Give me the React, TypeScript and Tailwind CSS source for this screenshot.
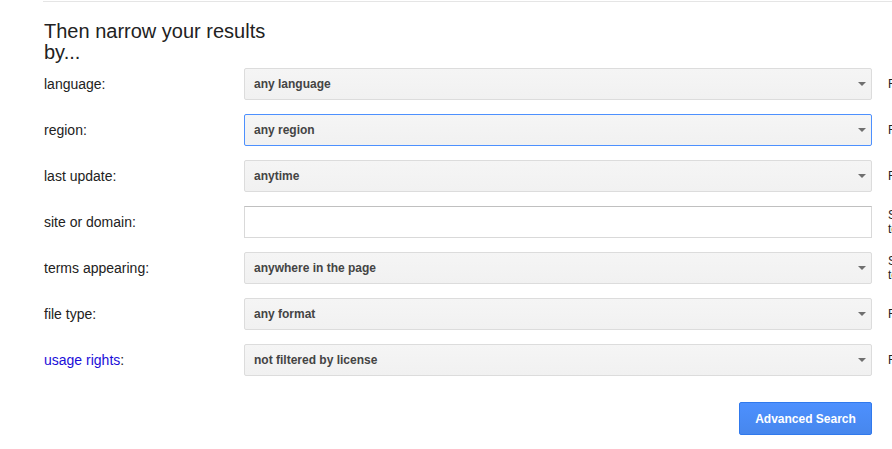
import React from "react";

type Row = {
  label: string;
  value?: string;
  input?: boolean;
  focused?: boolean;
  link?: boolean;
  help: string[];
};

const rows: Row[] = [
  { label: "language:", value: "any language", help: ["Find pages in the language that you select."] },
  { label: "region:", value: "any region", focused: true, help: ["Find pages published in a particular region."] },
  { label: "last update:", value: "anytime", help: ["Find pages updated within the time that you specify."] },
  { label: "site or domain:", input: true, help: ["Search one site (like wikipedia.org) or limit your results", "to a domain like .edu, .org or .gov"] },
  { label: "terms appearing:", value: "anywhere in the page", help: ["Search for terms in the whole page, page title or web address,", "to links to the page you're looking for."] },
  { label: "file type:", value: "any format", help: ["Find pages in the format that you prefer."] },
  { label: "usage rights:", value: "not filtered by license", link: true, help: ["Find pages that you are free to use yourself."] },
];

function Arrow() {
  return (
    <svg width="8" height="4" viewBox="0 0 8 4" className="absolute right-[5px] top-1/2 -translate-y-1/2">
      <path d="M0 0h8L4 4z" fill="#6f6f6f" />
    </svg>
  );
}

export default function App() {
  return (
    <div className="w-[892px] h-[449px] overflow-hidden bg-white font-['Liberation_Sans',Arial,sans-serif] text-[#222]">
      <div className="pl-[43px]">
        <div className="h-[1px] mt-[1px] bg-[#e5e5e5]" />
      </div>
      <div className="pl-[44px] pt-[19px]">
        <div className="w-[240px] text-[20px] leading-[21px] text-[#222]">Then narrow your results by...</div>
        <div className="mt-[5px] flex flex-col gap-[14px]">
          {rows.map((r) => (
            <div key={r.label} className="flex items-center h-[32px]">
              <div className="w-[200px] shrink-0 text-[14px]">
                {r.link ? (
                  <>
                    <span className="text-[#1a0dd8]">usage rights</span>:
                  </>
                ) : (
                  r.label
                )}
              </div>
              {r.input ? (
                <div className="w-[628px] h-[32px] shrink-0 border border-[#d9d9d9] border-t-[#c0c0c0] bg-white" />
              ) : (
                <div
                  className={`relative w-[628px] h-[32px] shrink-0 rounded-[2px] border bg-gradient-to-b from-[#f5f5f5] to-[#f1f1f1] pl-[9px] flex items-center text-[12px] font-bold text-[#444] ${
                    r.focused ? "border-[#4d90fe]" : "border-[#dcdcdc]"
                  }`}
                >
                  {r.value}
                  <Arrow />
                </div>
              )}
              <div className="ml-[16px] whitespace-nowrap text-[12px] leading-[14px] text-[#222]">
                {r.help.map((h) => (
                  <div key={h}>{h}</div>
                ))}
              </div>
            </div>
          ))}
        </div>
        <div className="flex w-[828px] justify-end mt-[26px]">
          <button className="w-[133px] h-[33px] rounded-[2px] border border-[#3079ed] bg-gradient-to-b from-[#4d90fe] to-[#4787ed] text-white text-[12px] font-bold">
            Advanced Search
          </button>
        </div>
      </div>
    </div>
  );
}
